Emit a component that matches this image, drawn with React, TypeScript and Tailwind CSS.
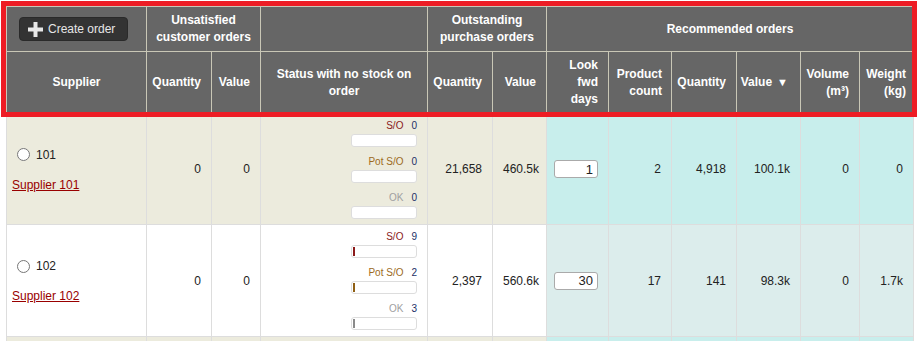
import type { ReactNode } from "react";

type Row = {
	id: string;
	name: string;
	unsatQty: string;
	unsatValue: string;
	so: number;
	potSo: number;
	ok: number;
	poQty: string;
	poValue: string;
	days: string;
	products: string;
	recQty: string;
	recValue: string;
	volume: string;
	weight: string;
};

const ROWS: Row[] = [
	{
		id: "101",
		name: "Supplier 101",
		unsatQty: "0",
		unsatValue: "0",
		so: 0,
		potSo: 0,
		ok: 0,
		poQty: "21,658",
		poValue: "460.5k",
		days: "1",
		products: "2",
		recQty: "4,918",
		recValue: "100.1k",
		volume: "0",
		weight: "0",
	},
	{
		id: "102",
		name: "Supplier 102",
		unsatQty: "0",
		unsatValue: "0",
		so: 9,
		potSo: 2,
		ok: 3,
		poQty: "2,397",
		poValue: "560.6k",
		days: "30",
		products: "17",
		recQty: "141",
		recValue: "98.3k",
		volume: "0",
		weight: "1.7k",
	},
];

const TH = "border border-[#c9c7b6] bg-[#666666] font-bold text-white";

function PlusIcon() {
	return (
		<svg width="15" height="15" viewBox="0 0 15 15" className="shrink-0">
			<rect x="5.5" y="0" width="4" height="15" fill="#e8e8e8" />
			<rect x="0" y="5.5" width="15" height="4" fill="#e8e8e8" />
		</svg>
	);
}

function Meter({
	label,
	count,
	tone,
	fill,
}: {
	label: string;
	count: number;
	tone: string;
	fill: string | null;
}) {
	return (
		<div className="mb-[8px] last:mb-0">
			<div className="flex h-[14px] items-center justify-end text-[10px] leading-[14px]">
				<span className={tone}>{label}</span>
				<span className="ml-[8px] text-[#1c2f66]">{count}</span>
			</div>
			<div className="ml-auto mt-[1px] flex h-[13px] w-[66px] rounded-[3px] border border-[#dddddd] bg-white p-[1px]">
				{fill && <div className={fill} />}
			</div>
		</div>
	);
}

function Num({ children, className }: { children?: ReactNode; className: string }) {
	return (
		<td className={`border border-[#dddddd] px-[10px] text-right align-middle ${className}`}>
			{children}
		</td>
	);
}

export default function App() {
	return (
		<div className="relative h-[341px] overflow-hidden bg-white font-['Liberation_Sans',Arial,sans-serif] text-[12px] leading-[16px] text-[#222222]">
			<div className="pl-[6px] pt-[6px]">
				<table className="w-[907px] table-fixed border-collapse">
					<colgroup>
						<col className="w-[140px]" />
						<col className="w-[65px]" />
						<col className="w-[49px]" />
						<col className="w-[167px]" />
						<col className="w-[65px]" />
						<col className="w-[54px]" />
						<col className="w-[62px]" />
						<col className="w-[63px]" />
						<col className="w-[65px]" />
						<col className="w-[64px]" />
						<col className="w-[59px]" />
						<col className="w-[54px]" />
					</colgroup>
					<thead className="text-[12px] leading-[17px]">
						<tr className="h-[45px]">
							<th className={`${TH} pl-[12px] text-left`}>
								<button
									type="button"
									className="flex h-[24px] w-[109px] items-center gap-[5px] rounded-[4px] border border-[#2a2a2a] bg-[#333333] pl-[8px] text-[12px] font-normal text-[#e6e6e6]"
								>
									<PlusIcon />
									Create order
								</button>
							</th>
							<th colSpan={2} className={`${TH} px-[8px] text-center`}>
								Unsatisfied customer orders
							</th>
							<th className={TH} />
							<th colSpan={2} className={`${TH} px-[8px] text-center`}>
								Outstanding purchase orders
							</th>
							<th colSpan={6} className={`${TH} text-center`}>
								Recommended orders
							</th>
						</tr>
						<tr className="h-[62px]">
							<th className={`${TH} text-center`}>Supplier</th>
							<th className={`${TH} pr-[10px] text-right`}>Quantity</th>
							<th className={`${TH} pr-[10px] text-right`}>Value</th>
							<th className={`${TH} px-[10px] text-center`}>Status with no stock on order</th>
							<th className={`${TH} pr-[10px] text-right`}>Quantity</th>
							<th className={`${TH} pr-[10px] text-right`}>Value</th>
							<th className={`${TH} pl-[4px] pr-[10px] text-right`}>Look fwd days</th>
							<th className={`${TH} pl-[4px] pr-[9px] text-right`}>Product count</th>
							<th className={`${TH} pr-[10px] text-right`}>Quantity</th>
							<th className={`${TH} pr-[12px] text-right`}>
								Value<span className="ml-[5px] text-[11px]">▼</span>
							</th>
							<th className={`${TH} pl-[4px] pr-[10px] text-right`}>
								Volume (m³)
							</th>
							<th className={`${TH} pl-[2px] pr-[7px] text-right`}>Weight (kg)</th>
						</tr>
					</thead>
					<tbody>
						{ROWS.map((row, i) => {
							const odd = i % 2 === 0;
							const left = odd ? "bg-[#ecebdd]" : "bg-white";
							const right = odd ? "bg-[#c8eeec]" : "bg-[#dcedec]";
							return (
								<tr key={row.id} className={i === 0 ? "h-[111px]" : "h-[112px]"}>
									<td className={`border border-[#dddddd] px-[5px] align-middle ${left}`}>
										<div className="flex h-[18px] items-center">
											<input
												type="radio"
												name="supplier"
												className="m-0 ml-[5px] mr-[6px] h-[13px] w-[13px]"
											/>
											<span>{row.id}</span>
										</div>
										<div className="mt-[13px]">
											<a href="#" className="text-[#990000] underline">
												{row.name}
											</a>
										</div>
									</td>
									<Num className={left}>{row.unsatQty}</Num>
									<Num className={left}>{row.unsatValue}</Num>
									<td className={`border border-[#dddddd] px-[10px] py-[5px] align-top ${left}`}>
										<Meter
											label="S/O"
											count={row.so}
											tone="text-[#8b1a1a]"
											fill={row.so ? "w-[2px] bg-[#8b1a1a]" : null}
										/>
										<Meter
											label="Pot S/O"
											count={row.potSo}
											tone="text-[#9c6a1c]"
											fill={row.potSo ? "w-[2px] bg-[#8f5f14]" : null}
										/>
										<Meter
											label="OK"
											count={row.ok}
											tone="text-[#a0a0a0]"
											fill={row.ok ? "w-[2px] bg-[#8a8a8a]" : null}
										/>
									</td>
									<Num className={left}>{row.poQty}</Num>
									<Num className={left}>{row.poValue}</Num>
									<td className={`border border-[#dddddd] px-[10px] align-middle ${right}`}>
										<div className="flex justify-end">
											<input
												type="text"
												defaultValue={row.days}
												className="h-[18px] w-[44px] rounded-[3px] border border-[#aaaaaa] bg-white pr-[4px] text-right text-[13px] text-[#222222] outline-none"
											/>
										</div>
									</td>
									<Num className={right}>{row.products}</Num>
									<Num className={right}>{row.recQty}</Num>
									<Num className={right}>{row.recValue}</Num>
									<Num className={right}>{row.volume}</Num>
									<Num className={right}>{row.weight}</Num>
								</tr>
							);
						})}
						{/* next row only peeks in at the bottom edge */}
						<tr className="h-[112px]">
							<Num className="bg-[#ecebdd]" />
							<Num className="bg-[#ecebdd]" />
							<Num className="bg-[#ecebdd]" />
							<Num className="bg-[#ecebdd]" />
							<Num className="bg-[#ecebdd]" />
							<Num className="bg-[#ecebdd]" />
							<Num className="bg-[#c8eeec]" />
							<Num className="bg-[#c8eeec]" />
							<Num className="bg-[#c8eeec]" />
							<Num className="bg-[#c8eeec]" />
							<Num className="bg-[#c8eeec]" />
							<Num className="bg-[#c8eeec]" />
						</tr>
					</tbody>
				</table>
			</div>
			<div className="pointer-events-none absolute left-[1px] top-[1px] h-[116px] w-[916px] border-[5px] border-[#ed1c24]" />
		</div>
	);
}
